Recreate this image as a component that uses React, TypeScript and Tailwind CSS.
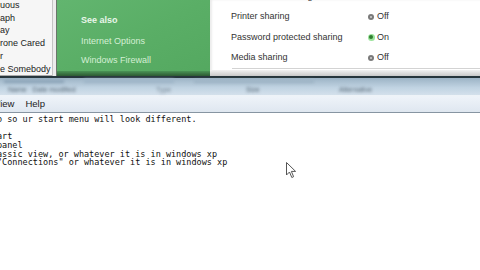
import React from 'react';

const sans = { fontFamily: '"Liberation Sans", Arial, sans-serif' };
const mono = { fontFamily: '"DejaVu Sans Mono", "Liberation Mono", monospace' };

function Bullet({ on }: { on?: boolean }) {
  return on ? (
    <span className="inline-flex h-[7px] w-[7px] items-center justify-center rounded-full bg-[#9be39b]">
      <span className="h-[4px] w-[4px] rounded-full bg-[#2f7d2f]" />
    </span>
  ) : (
    <span className="inline-flex h-[6px] w-[6px] items-center justify-center rounded-full bg-[#7a7a7a]">
      <span className="h-[2px] w-[2px] rounded-full bg-[#d0d0d0]" />
    </span>
  );
}

const sharing = [
  { label: 'Public folder sharing', on: false },
  { label: 'Printer sharing', on: false },
  { label: 'Password protected sharing', on: true },
  { label: 'Media sharing', on: false },
];

const songs = ['uous', 'aph', 'ay', 'rone Cared', 'r', 'e Somebody'];

const lines = [
  'o so ur start menu will look different.',
  '',
  'art',
  'panel',
  'assic view, or whatever it is in windows xp',
  '"Connections" or whatever it is in windows xp',
];

export default function App() {
  return (
    <div className="relative flex h-[270px] w-[480px] flex-col overflow-hidden bg-white" style={sans}>
      {/* top: control panel window behind */}
      <div className="flex h-[76px] shrink-0">
        <div className="flex w-[52px] flex-col bg-[#f6f6f6] text-[9px] leading-[12.7px] text-[#222]">
          <div className="-mt-[1px] flex flex-1 flex-col">
            {songs.map((s) => (
              <div key={s} className="whitespace-nowrap">{s}</div>
            ))}
          </div>
          <div className="h-[4px] border-t border-[#a9a9a9] bg-[#dcdcdc]" />
        </div>
        <div className="w-[5px] border-l border-[#c4c4c4] bg-[#ececec] shadow-[inset_-1px_0_0_#6b756b]" />
        <div className="flex w-[153px] flex-col bg-gradient-to-br from-[#62b56f] via-[#5aae66] to-[#54a860]">
          <div className="flex flex-1 flex-col gap-[8px] pl-[24px] pt-[15px] text-[9px] leading-[11px]">
            <div className="font-bold text-[#e9f6e9]">See also</div>
            <div className="pt-[2px] text-[#d4efd4]">Internet Options</div>
            <div className="text-[#d4efd4]">Windows Firewall</div>
          </div>
          <div className="h-[5px] bg-gradient-to-b from-[#4a9456] to-[#2d5a33]" />
        </div>
        <div className="flex flex-1 flex-col bg-white shadow-[inset_2px_0_2px_rgba(0,0,0,0.08)]">
          <div className="-mt-[14px] flex flex-col pl-[21px] text-[9px] text-[#333]">
            {sharing.map((r) => (
              <div key={r.label} className="flex h-[20.5px] items-center">
                <div className="w-[135px] whitespace-nowrap">{r.label}</div>
                <div className="flex w-[10px] justify-center"><Bullet on={r.on} /></div>
                <div className="pl-[1px]">{r.on ? 'On' : 'Off'}</div>
              </div>
            ))}
          </div>
          <div className="ml-[22px] h-px bg-[#d3d3d3]" />
          <div className="flex-1" />
          <div className="h-[6px] bg-gradient-to-b from-[#f2f2f2] to-[#c9c9c9]" />
        </div>
      </div>

      <div className="h-[2px] shrink-0 bg-[#26353c]" />

      {/* blurred glass title band */}
      <div className="relative flex h-[19px] shrink-0 flex-col bg-gradient-to-b from-[#9cb3c5] via-[#c0d3e2] to-[#d9e4ee]">
        <div className="flex h-[8px] gap-[20px] pl-[4px] blur-[1.5px]">
          <div className="mt-[2px] h-[3px] w-[60px] bg-[#8aa2b6]" />
          <div className="mt-[1px] h-[4px] w-[90px] bg-[#9fb6c8]" />
          <div className="mt-[2px] h-[3px] w-[120px] bg-[#9db3c4]" />
        </div>
        <div className="flex items-center pl-[8px] text-[7px] leading-[8px] text-[#5a6a78] blur-[1.4px]">
          <span className="w-[148px]">Name &nbsp; Date modified</span>
          <span className="w-[90px] opacity-70">Type</span>
          <span className="w-[93px]">Size</span>
          <span>Alternative</span>
        </div>
        <div className="mt-auto h-[2px] bg-[#eef3f8]" />
      </div>

      {/* notepad menu bar */}
      <div className="flex h-[16px] shrink-0 items-center gap-[11px] border-b border-[#8795a2] bg-gradient-to-b from-[#eef3f9] to-[#dfe7f0] text-[9.5px] text-[#222]">
        <span className="-ml-[6px]">View</span>
        <span>Help</span>
      </div>

      {/* notepad text */}
      <div className="flex flex-1 flex-col pt-[2px] text-[8.5px] leading-[8.7px] text-[#111]" style={mono}>
        {lines.map((l, i) => (
          <div key={i} className="-ml-[3px] h-[8.7px] whitespace-pre">{l}</div>
        ))}
      </div>

      {/* mouse cursor */}
      <svg className="absolute left-[286px] top-[162px]" width="11" height="17" viewBox="0 0 11 17">
        <path d="M0.5 0.5 L0.5 13 L3.5 10 L5.8 15.5 L7.6 14.7 L5.4 9.4 L9.6 9.4 Z" fill="#fff" stroke="#555" strokeWidth="1" strokeLinejoin="round" />
      </svg>
    </div>
  );
}
